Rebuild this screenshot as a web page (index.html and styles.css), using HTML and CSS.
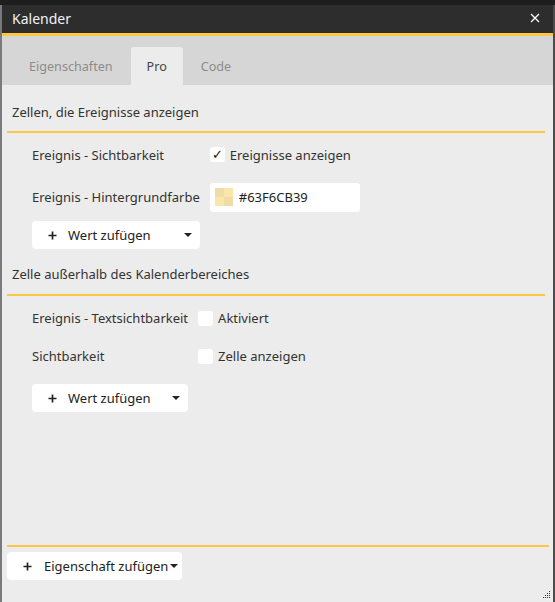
FILE: index.html
```html
<!DOCTYPE html>
<html lang="de">
<head>
<meta charset="utf-8">
<title>Kalender</title>
<link rel="stylesheet" href="styles.css">
</head>
<body>
<div class="window">
  <div class="titlebar">
    <span class="title">Kalender</span>
    <svg class="close" width="10" height="10" viewBox="0 0 10 10"><path d="M1 1L9 9M9 1L1 9" stroke="#fff" stroke-width="1.3" fill="none"/></svg>
  </div>
  <div class="tabs">
    <div class="tab">Eigenschaften</div>
    <div class="tab active">Pro</div>
    <div class="tab">Code</div>
  </div>
  <div class="content">
    <div class="section-head first">Zellen, die Ereignisse anzeigen</div>
    <div class="grid grid-a">
      <div class="label">Ereignis - Sichtbarkeit</div>
      <label class="check"><span class="box">✓</span>Ereignisse anzeigen</label>
      <div class="label">Ereignis - Hintergrundfarbe</div>
      <div class="color-input"><span class="swatch"></span>#63F6CB39</div>
      <div class="btn add-value first-btn"><svg class="plus" width="9" height="9" viewBox="0 0 9 9"><path d="M4.5 0.5V8.5M0.5 4.5H8.5" stroke="#222" stroke-width="1.7"/></svg><span class="btn-text">Wert zufügen</span><span class="caret"></span></div>
    </div>
    <div class="section-head second">Zelle außerhalb des Kalenderbereiches</div>
    <div class="grid grid-b">
      <div class="label">Ereignis - Textsichtbarkeit</div>
      <label class="check"><span class="box"></span>Aktiviert</label>
      <div class="label">Sichtbarkeit</div>
      <label class="check"><span class="box"></span>Zelle anzeigen</label>
      <div class="btn add-value second-btn"><svg class="plus" width="9" height="9" viewBox="0 0 9 9"><path d="M4.5 0.5V8.5M0.5 4.5H8.5" stroke="#222" stroke-width="1.7"/></svg><span class="btn-text">Wert zufügen</span><span class="caret"></span></div>
    </div>
    <div class="footer">
      <div class="btn add-prop"><svg class="plus" width="9" height="9" viewBox="0 0 9 9"><path d="M4.5 0.5V8.5M0.5 4.5H8.5" stroke="#222" stroke-width="1.7"/></svg><span class="btn-text">Eigenschaft zufügen</span><span class="caret"></span></div>
    </div>
    <svg class="grip" width="9" height="9" viewBox="0 0 9 9">
      <rect x="7" y="1" width="1" height="1" fill="#333"/>
      <rect x="7" y="3" width="1" height="1" fill="#333"/>
      <rect x="5" y="3" width="1" height="1" fill="#333"/>
      <rect x="7" y="5" width="1" height="1" fill="#333"/>
      <rect x="5" y="5" width="1" height="1" fill="#333"/>
      <rect x="3" y="5" width="1" height="1" fill="#333"/>
      <rect x="7" y="7" width="1" height="1" fill="#333"/>
      <rect x="5" y="7" width="1" height="1" fill="#333"/>
      <rect x="3" y="7" width="1" height="1" fill="#333"/>
      <rect x="1" y="7" width="1" height="1" fill="#333"/>
    </svg>
  </div>
</div>
</body>
</html>
```
FILE: styles.css
```css
* { box-sizing: border-box; }
html, body { margin: 0; padding: 0; }
body {
  background: #1e1e1e;
  font-family: "Noto Sans", "Open Sans", sans-serif;
  font-size: 13px;
  color: #333;
  width: 555px;
  height: 602px;
  overflow: hidden;
}
.window {
  margin-top: 5px;
  height: 597px;
  background: #ececec;
  border-left: 2px solid #7a7a7a;
  border-right: 2px solid #4c4c4c;
  display: flex;
  flex-direction: column;
}
.titlebar {
  height: 31px;
  background: #2d2d2d;
  border-bottom: 3px solid #fbc744;
  display: flex;
  align-items: center;
  justify-content: space-between;
  padding: 0 13px 2px 10px;
}
.title {
  color: #f2f2f2;
  font-size: 14px;
}
.close { display: block; }
.tabs {
  height: 49px;
  background: #d6d6d6;
  display: flex;
  align-items: flex-end;
  gap: 2px;
  padding-left: 11px;
}
.tab {
  height: 38px;
  padding: 0 16px;
  display: flex;
  align-items: center;
  font-size: 12.6px;
  color: #8c8c8c;
  border-radius: 3px 3px 0 0;
  white-space: nowrap;
}
.tab.active {
  background: #ececec;
  color: #454545;
}
.content {
  flex: 1;
  display: flex;
  flex-direction: column;
  padding: 0 8px 0 5px;
  position: relative;
}
.section-head {
  line-height: 18px;
  padding-left: 5px;
  border-bottom: 2px solid #fbc744;
}
.section-head.first { padding-top: 18px; padding-bottom: 10px; }
.section-head.second { padding-top: 16px; padding-bottom: 11px; }
.grid {
  display: grid;
  grid-template-columns: max-content max-content;
  column-gap: 10px;
  align-items: center;
  padding-left: 25px;
}
.grid-a { grid-template-rows: 43px 42px auto; }
.grid-b { grid-template-rows: 44px 32px auto; }
.check {
  display: flex;
  align-items: center;
  gap: 5px;
}
.box {
  width: 15px;
  height: 15px;
  background: #fff;
  border-radius: 3px;
  display: flex;
  align-items: center;
  justify-content: center;
  font-size: 13px;
  color: #111;
  line-height: 1;
}
.color-input {
  width: 150px;
  height: 29px;
  background: #fff;
  border-radius: 3px;
  display: flex;
  align-items: center;
  padding-left: 5px;
  gap: 6px;
  color: #222;
}
.swatch {
  width: 18px;
  height: 18px;
  background:
    linear-gradient(#efdca6, #efdca6) 0 0 / 9px 9px no-repeat,
    linear-gradient(#efdca6, #efdca6) 9px 9px / 9px 9px no-repeat,
    #f9e6ab;
}
.btn {
  height: 28px;
  background: #fff;
  border-radius: 4px;
  display: flex;
  align-items: center;
  color: #222;
  font-size: 13px;
  white-space: nowrap;
}
.add-value {
  grid-column: 1;
  padding: 0 8px 0 16px;
}
.first-btn { margin-top: 3px; }
.second-btn { margin-top: 12px; }
.plus { display: block; flex: none; }
.btn-text { margin-left: 11px; flex: 1; }
.caret {
  width: 0;
  height: 0;
  border-left: 4px solid transparent;
  border-right: 4px solid transparent;
  border-top: 4px solid #222;
}
.footer {
  margin-top: auto;
  margin-right: -4px;
  border-top: 2px solid #fbc744;
  padding-top: 5px;
  padding-bottom: 22px;
  display: flex;
}
.add-prop {
  padding: 0 4px 0 16px;
}
.add-prop .btn-text { margin-left: 12px; margin-right: 2px; }
.grip {
  position: absolute;
  right: 2px;
  bottom: 3px;
}
```
